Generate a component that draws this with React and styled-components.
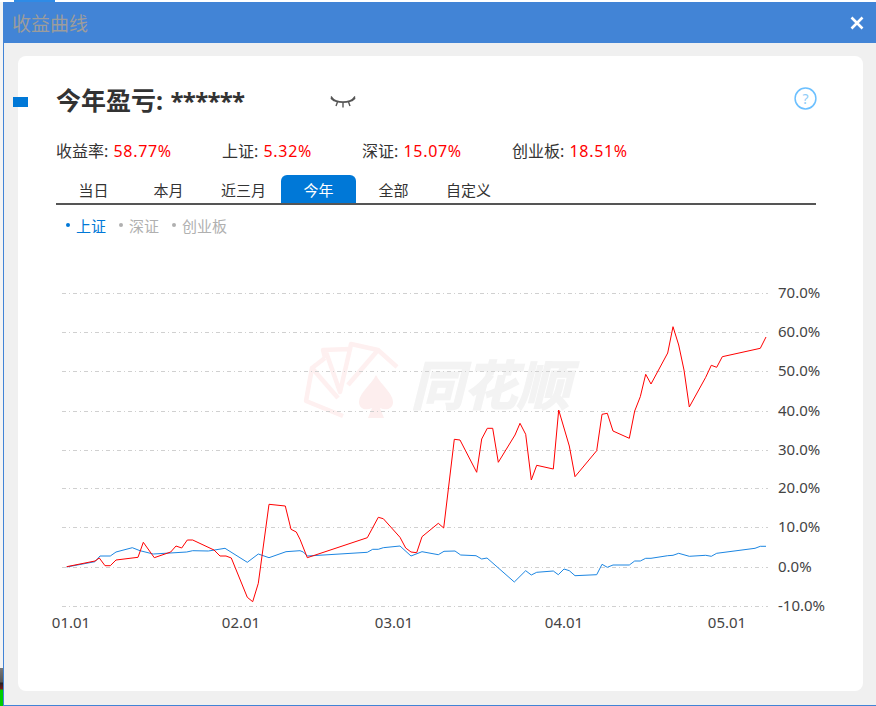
import styled, { createGlobalStyle } from "styled-components";

const GlobalStyle = createGlobalStyle`
  html, body {
    margin: 0;
    padding: 0;
    background: #fff;
  }
  body {
    font-family: "Noto Sans", "Noto Sans CJK SC", sans-serif;
  }
`;

const Page = styled.div`
  width: 876px;
  height: 706px;
  display: flex;
  flex-direction: column;
  overflow: hidden;
`;
const TopStrip = styled.div`
  height: 2px;
  flex: none;
  padding-left: 14px;
`;
const TopTab = styled.div`
  width: 41px;
  height: 2px;
  background: #2f8be6;
`;
const Row = styled.div`
  flex: 1;
  display: flex;
  min-height: 0;
`;
const LeftEdge = styled.div`
  width: 3px;
  flex: none;
  display: flex;
  flex-direction: column;
  justify-content: flex-end;
  background: #f4f4f4;
`;
const Desktop = styled.div`
  height: 38px;
  background: linear-gradient(
    #777 0,
    #555 14px,
    #222 15px,
    #7a1818 21px,
    #0c0 22px,
    #0c0 38px
  );
`;
const Win = styled.div`
  flex: 1;
  display: flex;
  flex-direction: column;
  min-width: 0;
`;
const TitleBar = styled.div`
  height: 41px;
  flex: none;
  display: flex;
  align-items: center;
  justify-content: space-between;
  padding: 0 12px 0 9px;
  background: #4284d6;
`;
const WinTitle = styled.span`
  font-size: 19px;
  color: #9c9c9c;
`;
const Body = styled.div`
  flex: 1;
  display: flex;
  padding: 13px 13px 14px 14px;
  background: #f0f0f0;
  border-left: 1px solid #4284d6;
  border-bottom: 1px solid #4284d6;
  min-height: 0;
`;
const Card = styled.div`
  position: relative;
  flex: 1;
  display: flex;
  flex-direction: column;
  background: #fff;
  border-radius: 8px;
`;
const Marker = styled.div`
  position: absolute;
  left: -5px;
  top: 41px;
  width: 15px;
  height: 10px;
  background: #0078d7;
`;
const Head = styled.div`
  padding: 26px 47px 0 38px;
`;
const TitleRow = styled.div`
  display: flex;
  align-items: center;
  height: 36px;
`;
const Title = styled.h1`
  margin: 0;
  width: 274px;
  font-size: 25px;
  line-height: 36px;
  font-weight: 700;
  color: #333;
  white-space: nowrap;
`;
const Masked = styled.span`
  margin-left: 1px;
  font-size: 24px;
  letter-spacing: -0.7px;
`;
const EyeWrap = styled.svg`
  margin-top: 4px;
`;
const HelpIcon = styled.svg`
  margin-left: auto;
  margin-right: -1px;
  margin-top: -4px;
`;
const Stats = styled.div`
  display: flex;
  margin-top: 23px;
  height: 20px;
  align-items: center;
`;
const Stat = styled.div`
  width: ${(p) => p.$width}px;
  font-size: 16px;
  line-height: 20px;
  color: #333;
  white-space: nowrap;
`;
const Rate = styled.span`
  margin-left: 1px;
  color: #f00;
  letter-spacing: 0.7px;
`;
const Tabs = styled.div`
  display: flex;
  margin-top: 14px;
  border-bottom: 2px solid #555;
`;
const Tab = styled.div`
  width: 75px;
  height: 28px;
  line-height: 30px;
  text-align: center;
  font-size: 15px;
  border-radius: 6px 6px 0 0;
  color: ${(p) => (p.$active ? "#fff" : "#333")};
  background: ${(p) => (p.$active ? "#0078d7" : "transparent")};
`;
const Legend = styled.div`
  display: flex;
  margin-top: 10px;
  padding-left: 10px;
  height: 20px;
  align-items: center;
  gap: 13px;
`;
const LegendItem = styled.div`
  display: flex;
  align-items: center;
  gap: 6px;
  font-size: 15px;
  color: ${(p) => (p.$on ? "#0078d7" : "#b0b0b0")};
  &::before {
    content: "";
    width: 4px;
    height: 4px;
    border-radius: 50%;
    background: currentColor;
  }
`;
const Chart = styled.svg`
  display: block;
  margin-top: 5px;
  font-family: "Noto Sans", "Noto Sans CJK SC", sans-serif;
`;

const red =
  "66.7,566.7 95,561 99.3,558 105,565.7 110.3,565.7 116,560 138,557.3 143.3,542.3 154.3,557.7 170.7,552 176,546 181.7,548 187.3,540 192.7,540 214,550 220,556 226,556 231.3,558 247.3,597.3 252.7,601.7 258.3,583.3 269,504.3 285.3,506 291,529.3 296.3,532 300,539.3 307.3,557.7 367.3,537.7 378.3,517.3 383.3,518.7 400,537.3 405.7,548 411,552 416.7,552.7 422,536.7 438.3,523.3 443.7,528 454.3,439.3 460,440 476.7,472.3 481.7,439 487.3,428.3 492.7,428.3 498.3,462.3 515,435 520,423.3 525.7,434.3 531.3,480 536.7,465.3 553.3,469 558.7,410 569.3,446 575,476.7 596.7,450.7 602,414.3 607.3,413.3 613,431 629.3,438.3 634.7,411 640.3,396.7 645.7,374.3 651,384 667.7,353 673,326.7 678.7,345 684,370 689.3,407 705.7,377.3 711.3,365.3 716.7,367.3 722.3,356.7 760.3,348.3 766,337";
const blue =
  "66.7,567 95,561.7 100,556 110.3,556 116,552 132.3,547.7 140,550.7 153.3,554 186.7,552 192.7,550.7 208.3,551 225,548.3 247.3,562.3 258.3,554 269,557.7 286,551.7 300,550.7 303.3,552 307.3,556 367.3,552.3 372.7,549.3 378.3,549.3 383.3,547.7 400,546 411,556 422,551.7 438.3,554.7 444,551.3 455,551 460.7,555 476,555.7 481.7,559 487,558 514.3,582 525.7,570.7 531.3,575 536.7,572.3 553.3,571 558.3,574.7 564,569 569.3,570.7 575,575.7 596.7,574.7 602,564.3 607.3,567.3 613,565 629.3,565 634.7,561 640.3,561 645.7,558.3 651,558.3 667.7,555.7 673,555.3 678.7,553.3 689.3,556.3 705.7,555.3 711.3,556.3 716.7,553.3 755,548.3 760.3,546.3 766,546.3";

const yTicks = [
  ["70.0%", 293.5],
  ["60.0%", 332.5],
  ["50.0%", 371.5],
  ["40.0%", 411.5],
  ["30.0%", 450.5],
  ["20.0%", 488.5],
  ["10.0%", 527.5],
  ["0.0%", 567.5],
  ["-10.0%", 606.5],
];
const xTicks = [
  ["01.01", 71],
  ["02.01", 241],
  ["03.01", 394],
  ["04.01", 564],
  ["05.01", 727],
];

const CloseIcon = () => (
  <svg width="14" height="14" viewBox="0 0 14 14">
    <path d="M1.5 1.5 12.5 12.5M12.5 1.5 1.5 12.5" stroke="#fff" strokeWidth="2.6" />
  </svg>
);

const EyeIcon = () => (
  <EyeWrap width="26" height="12" viewBox="0 0 26 12" fill="none" stroke="#555" strokeWidth="1.8">
    <path d="M1 2C7 7.5 19 7.5 25 2" />
    <path d="M1 .5 4.5 5M25 .5 21.5 5M7.5 6 6 10M18.5 6 20 10M13 7V11.5" strokeWidth="1.4" />
  </EyeWrap>
);

const Watermark = () => (
  <g>
    <g fill="none" stroke="#fef0f0" strokeWidth="4.5" strokeLinejoin="round">
      <path d="M343 416 306 401 312 368 325 358" />
      <path d="M312 368 338 398" />
      <path d="M325 358 323 350 350 349 340 392 326 352" />
      <path d="M350 349 351 344 378 350 348 385" />
      <path d="M378 350 397 367" />
    </g>
    <path
      d="M376 375C381 385 393 393 393 402 393 409 386 411 380 408L384 418H368L372 408C366 411 359 409 359 402 359 393 371 385 376 375Z"
      fill="#fdeeee"
    />
    <text
      x="411"
      y="405"
      fontSize="53"
      fontWeight="700"
      fontStyle="italic"
      fill="#f3f3f3"
      stroke="#f3f3f3"
      strokeWidth="1.6"
    >
      同花顺
    </text>
  </g>
);

const App = () => (
  <Page>
    <GlobalStyle />
    <TopStrip>
      <TopTab />
    </TopStrip>
    <Row>
      <LeftEdge>
        <Desktop />
      </LeftEdge>
      <Win>
        <TitleBar>
          <WinTitle>收益曲线</WinTitle>
          <CloseIcon />
        </TitleBar>
        <Body>
          <Card>
            <Marker />
            <Head>
              <TitleRow>
                <Title>
                  今年盈亏: <Masked>******</Masked>
                </Title>
                <EyeIcon />
                <HelpIcon width="23" height="23" viewBox="0 0 23 23" fill="none">
                  <circle cx="11.5" cy="11.5" r="10.4" stroke="#6cc0ff" strokeWidth="1.5" />
                  <text x="11.5" y="16.5" textAnchor="middle" fontSize="14" fill="#8fcdf8">
                    ?
                  </text>
                </HelpIcon>
              </TitleRow>
              <Stats>
                <Stat $width={166}>
                  收益率: <Rate>58.77%</Rate>
                </Stat>
                <Stat $width={140}>
                  上证: <Rate>5.32%</Rate>
                </Stat>
                <Stat $width={150}>
                  深证: <Rate>15.07%</Rate>
                </Stat>
                <Stat $width={150}>
                  创业板: <Rate>18.51%</Rate>
                </Stat>
              </Stats>
              <Tabs>
                <Tab>当日</Tab>
                <Tab>本月</Tab>
                <Tab>近三月</Tab>
                <Tab $active>今年</Tab>
                <Tab>全部</Tab>
                <Tab>自定义</Tab>
              </Tabs>
              <Legend>
                <LegendItem $on>上证</LegendItem>
                <LegendItem>深证</LegendItem>
                <LegendItem>创业板</LegendItem>
              </Legend>
            </Head>
            <Chart width="845" height="451" viewBox="18 240 845 451">
              <Watermark />
              {yTicks.map(([label, y]) => (
                <g key={label}>
                  <line x1="62" x2="768" y1={y} y2={y} stroke="#d0d0d0" strokeDasharray="4 3 1 3" />
                  <text x="778" y={y + 4.5} fontSize="15" fill="#444">
                    {label}
                  </text>
                </g>
              ))}
              {xTicks.map(([label, x]) => (
                <text key={label} x={x} y="628" textAnchor="middle" fontSize="15" fill="#444">
                  {label}
                </text>
              ))}
              <polyline points={blue} fill="none" stroke="#1c86e2" strokeWidth="1" />
              <polyline points={red} fill="none" stroke="#f00" strokeWidth="1" />
            </Chart>
          </Card>
        </Body>
      </Win>
    </Row>
  </Page>
);

export default App;
